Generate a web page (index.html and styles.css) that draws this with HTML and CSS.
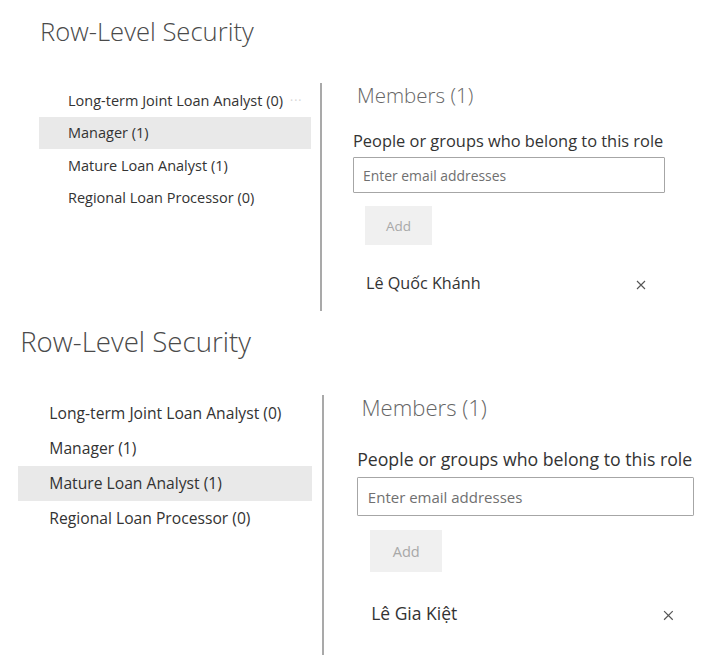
FILE: index.html
```html
<!DOCTYPE html>
<html lang="vi">
<head>
<meta charset="utf-8">
<title>Row-Level Security</title>
<link rel="stylesheet" href="styles.css">
</head>
<body>
  <div class="shot shot-a">
    <h1 class="title">Row-Level Security</h1>
    <div class="rls">
      <ul class="roles">
        <li class="role"><span>Long-term Joint Loan Analyst (0)</span><span class="more">···</span></li>
        <li class="role is-selected">Manager (1)</li>
        <li class="role">Mature Loan Analyst (1)</li>
        <li class="role">Regional Loan Processor (0)</li>
      </ul>
      <div class="divider"></div>
      <section class="members">
        <h2 class="members-title">Members (1)</h2>
        <label class="field-label" for="email-a">People or groups who belong to this role</label>
        <input id="email-a" class="email-input" type="text" placeholder="Enter email addresses">
        <button class="add-btn" type="button" disabled>Add</button>
        <div class="member">
          <span class="member-name">Lê Quốc Khánh</span>
          <svg class="remove" viewBox="0 0 10 10" width="10" height="10" aria-hidden="true"><path d="M1 1 L9 9 M9 1 L1 9" stroke="#555" stroke-width="1.1" fill="none"/></svg>
        </div>
      </section>
    </div>
  </div>

  <div class="shot shot-b">
    <h1 class="title">Row-Level Security</h1>
    <div class="rls">
      <ul class="roles">
        <li class="role">Long-term Joint Loan Analyst (0)</li>
        <li class="role">Manager (1)</li>
        <li class="role is-selected">Mature Loan Analyst (1)</li>
        <li class="role">Regional Loan Processor (0)</li>
      </ul>
      <div class="divider"></div>
      <section class="members">
        <h2 class="members-title">Members (1)</h2>
        <label class="field-label" for="email-b">People or groups who belong to this role</label>
        <input id="email-b" class="email-input" type="text" placeholder="Enter email addresses">
        <button class="add-btn" type="button" disabled>Add</button>
        <div class="member">
          <span class="member-name">Lê Gia Kiệt</span>
          <svg class="remove" viewBox="0 0 10 10" width="10" height="10" aria-hidden="true"><path d="M1 1 L9 9 M9 1 L1 9" stroke="#555" stroke-width="1.1" fill="none"/></svg>
        </div>
      </section>
    </div>
  </div>
</body>
</html>
```

FILE: styles.css
```css
* { box-sizing: border-box; }

html, body {
  margin: 0;
  padding: 0;
  background: #ffffff;
}

body {
  width: 706px;
  height: 659px;
  overflow: hidden;
  font-family: "Open Sans", "Noto Sans", "Liberation Sans", sans-serif;
  color: #333333;
}

.shot {
  overflow: hidden;
}

.shot-a {
  height: 320px;
  padding-left: 39px;
}

.shot-b {
  zoom: 1.08;
  height: 314px;
  padding-left: 16.7px;
}

.title {
  margin: 0;
  font-size: 25.6px;
  font-weight: 300;
  line-height: 32px;
  color: #4a4a4a;
  white-space: nowrap;
}

.shot-a .title {
  margin: 16px 0 35px 1px;
}

.shot-b .title {
  margin: 4px 0 33px 2px;
}

.rls {
  display: flex;
  align-items: stretch;
}

.shot-a .rls { height: 228px; }
.shot-b .rls { height: 241px; }

.roles {
  list-style: none;
  margin: 1px 0 0;
  padding: 0;
  width: 272px;
  align-self: flex-start;
}

.role {
  display: flex;
  align-items: center;
  height: 32.5px;
  padding-left: 29px;
  font-size: 14.5px;
  color: #333333;
  white-space: nowrap;
}

.role.is-selected {
  background: #e9e9e9;
}

.more {
  margin-left: 7px;
  color: #d4d4d4;
  font-size: 12px;
  letter-spacing: 1px;
}

.divider {
  width: 2px;
  margin-left: 9px;
  background: #a9a9a9;
}

.members {
  padding-left: 31px;
  width: 343px;
}

.members-title {
  margin: 0;
  padding-left: 4px;
  font-size: 20.5px;
  font-weight: 300;
  line-height: 24px;
  color: #666666;
  white-space: nowrap;
}

.field-label {
  display: block;
  margin-top: 24px;
  font-size: 16.4px;
  line-height: 20px;
  color: #333333;
  white-space: nowrap;
}

.shot-b .field-label {
  margin-top: 26.5px;
}

.email-input {
  display: block;
  margin-top: 6px;
  width: 312px;
  height: 36px;
  padding: 0 0 0 9px;
  border: 1px solid #a6a6a6;
  border-radius: 1px;
  font-family: inherit;
  font-size: 13.9px;
  color: #333333;
  background: #ffffff;
  outline: none;
}

.email-input::placeholder {
  color: #707070;
}

.add-btn {
  display: block;
  margin: 13px 0 0 12px;
  width: 67px;
  height: 39px;
  border: 0;
  padding: 0;
  background: #f0f0f0;
  font-family: inherit;
  font-size: 13.5px;
  color: #a8a8a8;
}

.member {
  display: flex;
  align-items: center;
  margin-top: 26px;
  width: 312px;
  height: 24px;
  padding-left: 13px;
  padding-right: 19px;
}

.member-name {
  flex: 1;
  font-size: 16.2px;
  color: #333333;
  white-space: nowrap;
}

.remove {
  margin-top: 4px;
}
```
